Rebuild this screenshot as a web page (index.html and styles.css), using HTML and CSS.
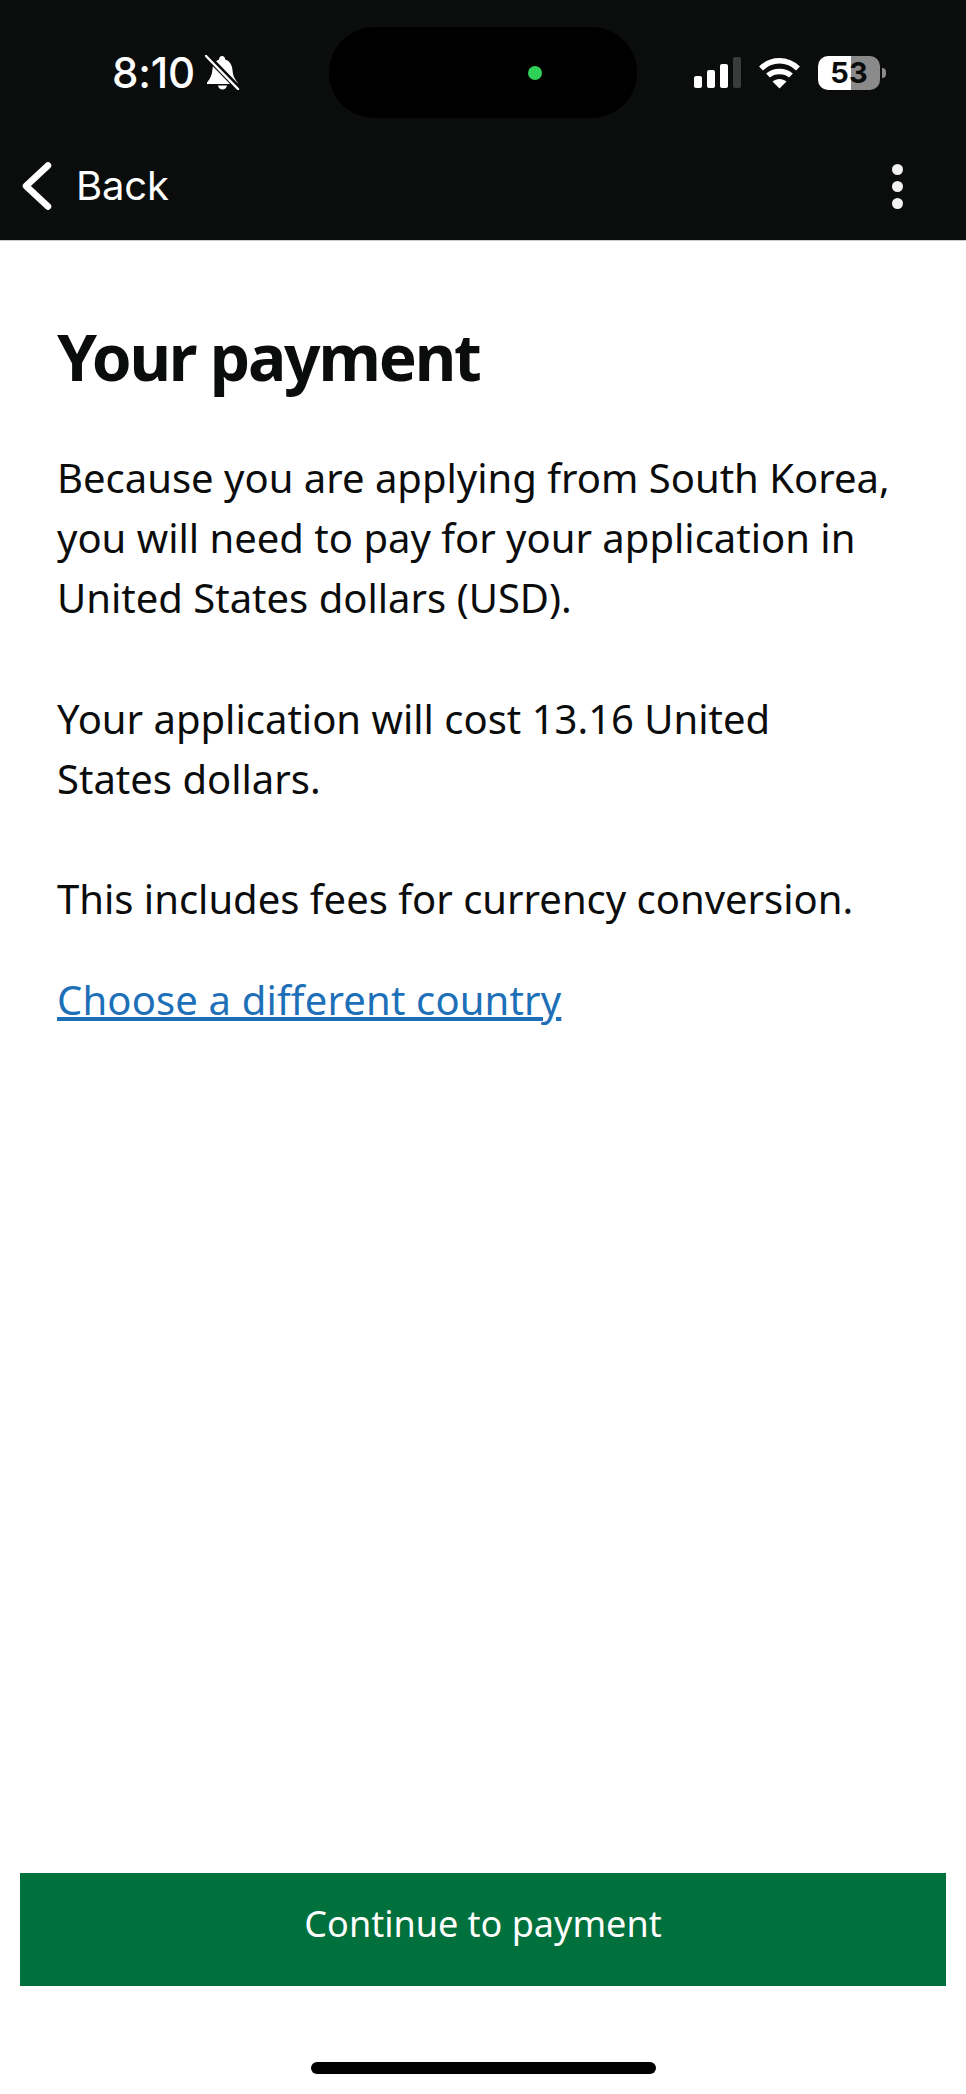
FILE: index.html
```html
<!DOCTYPE html>
<html lang="en">
<head>
<meta charset="utf-8">
<title>Your payment</title>
<link rel="stylesheet" href="styles.css">
</head>
<body>
<div class="screen">
  <header class="top">
    <div class="status">
      <div class="status-left">
        <span class="time">8:10</span>
        <svg class="bell" viewBox="0 0 35 35" width="35" height="35">
          <path fill="#fff" d="M17 1c2 0 3 1.500 3.300 3.500C25 6 27 10 27.500 15c.4 5 1.500 8 5 12.500V29H2v-1.500C6 23 7 19 7.500 14 8 9.500 10 6 14 4.500 14.300 2.500 15 1 17 1zM13 30.500h9c-.5 2.500-2.300 4-4.500 4s-4-1.500-4.500-4z"/>
          <path stroke="#0b0c0c" stroke-width="6" d="M0 -1L35 35"/>
          <path stroke="#fff" stroke-width="2.500" stroke-linecap="round" d="M1 1L33 34"/>
        </svg>
      </div>
      <div class="island"><span class="camera-dot"></span></div>
      <div class="status-right">
        <div class="signal">
          <span class="bar bar-1"></span>
          <span class="bar bar-2"></span>
          <span class="bar bar-3"></span>
          <span class="bar bar-4"></span>
        </div>
        <svg class="wifi" viewBox="0 0 41 32" width="41" height="32">
          <path fill="none" stroke="#fff" stroke-width="5.500" d="M2 11.500C12.500 1.200 28.500 1.200 39 11.500"/>
          <path fill="none" stroke="#fff" stroke-width="5.500" d="M9 18.500C15 13 26 13 32 18.500"/>
          <path fill="#fff" d="M13.500 24.500C17.500 21 23.500 21 27.500 24.500L20.500 31.500z"/>
        </svg>
        <div class="battery">
          <div class="battery-body"><span class="battery-level">53</span></div>
          <span class="battery-nub"></span>
        </div>
      </div>
    </div>
    <nav class="nav">
      <a class="back" href="#">
        <svg class="chevron" viewBox="0 0 30 48" width="30" height="48">
          <path fill="none" stroke="#fff" stroke-width="6.500" stroke-linecap="round" stroke-linejoin="round" d="M26 3.500L4 24L26 44.500"/>
        </svg>
        <span>Back</span>
      </a>
      <div class="menu"><span class="dot"></span><span class="dot"></span><span class="dot"></span></div>
    </nav>
  </header>
  <main class="content">
    <h1 class="title">Your payment</h1>
    <p class="para">Because you are applying from South Korea,<br>you will need to pay for your application in<br>United States dollars (USD).</p>
    <p class="para">Your application will cost 13.16 United<br>States dollars.</p>
    <p class="para">This includes fees for currency conversion.</p>
    <a class="link" href="#">Choose a different country</a>
  </main>
  <footer class="footer">
    <button class="continue" type="button">Continue to payment</button>
    <div class="home-bar"></div>
  </footer>
</div>
</body>
</html>
```
FILE: styles.css
```css
* { box-sizing: border-box; }
html, body { margin: 0; padding: 0; background: #fff; }
body { font-family: "Noto Sans", "Open Sans", sans-serif; color: #0b0c0c; }
.screen { width: 966px; height: 2094px; display: flex; flex-direction: column; overflow: hidden; }

.top { height: 241px; background: #0b0c0c; border-bottom: 1px solid #c8c8c8; flex: none; }
.status { height: 131px; padding: 27px 80px 0 112px; display: flex; align-items: flex-start; }
.status-left { width: 217px; height: 91px; display: flex; align-items: center; gap: 10px; color: #fff; }
.time { font-family: Inter, sans-serif; font-weight: 500; font-size: 42px; line-height: 50px; letter-spacing: -.2px; }
.bell { flex: none; }
.island { width: 308px; height: 91px; border-radius: 46px; background: #000; position: relative; }
.camera-dot { position: absolute; left: 199px; top: 39px; width: 14px; height: 14px; border-radius: 50%; background: #30d158; }
.status-right { height: 91px; margin-left: auto; display: flex; align-items: center; gap: 18px; }
.signal { display: flex; align-items: flex-end; gap: 5px; height: 31px; }
.bar { width: 8px; background: #fff; border-radius: 2px; }
.bar-1 { height: 12px; }
.bar-2 { height: 18px; }
.bar-3 { height: 24px; }
.bar-4 { height: 31px; background: #3a3b3b; }
.wifi { flex: none; }
.battery { display: flex; align-items: center; gap: 2px; }
.battery-body { width: 62px; height: 34px; border-radius: 10px; background: linear-gradient(to right, #fff 0, #fff 33px, #8a8a8a 33px); display: flex; align-items: center; justify-content: center; }
.battery-level { font-family: Inter, sans-serif; font-weight: 700; font-size: 29px; line-height: 34px; color: #0b0c0c; }
.battery-nub { width: 4px; height: 10px; border-radius: 0 4px 4px 0; background: #8a8a8a; }

.nav { height: 109px; padding: 1px 63px 0 22px; display: flex; justify-content: space-between; align-items: center; }
.back { display: flex; align-items: center; gap: 24px; color: #fff; text-decoration: none; font-family: Inter, sans-serif; font-size: 40px; line-height: 48px; letter-spacing: -.2px; }
.chevron { flex: none; }
.menu { display: flex; flex-direction: column; gap: 6px; }
.dot { width: 11px; height: 11px; border-radius: 50%; background: #f2f2f2; filter: blur(.6px); }

.content { flex: 1; padding: 0 40px 0 57px; }
.title { margin: 76px 0 0; font-size: 64px; line-height: 80px; font-weight: 700; letter-spacing: -2.2px; }
.para { margin: 51px 0 60.5px; font-size: 40px; line-height: 60px; white-space: nowrap; }
.para + .para { margin-top: 0; }
.link { display: inline-block; margin-top: -20px; font-size: 40px; line-height: 60px; letter-spacing: .15px; color: #1d70b8; }

.footer { flex: none; height: 221px; display: flex; flex-direction: column; align-items: center; padding: 0 20px; }
.continue { width: 100%; height: 113px; padding: 0 0 13px; border: 0; border-radius: 0; background: #00703c; color: #fff; font-family: "Noto Sans", sans-serif; font-size: 36px; }
.home-bar { width: 345px; height: 12px; margin-top: 76px; border-radius: 6px; background: #000; }
```
